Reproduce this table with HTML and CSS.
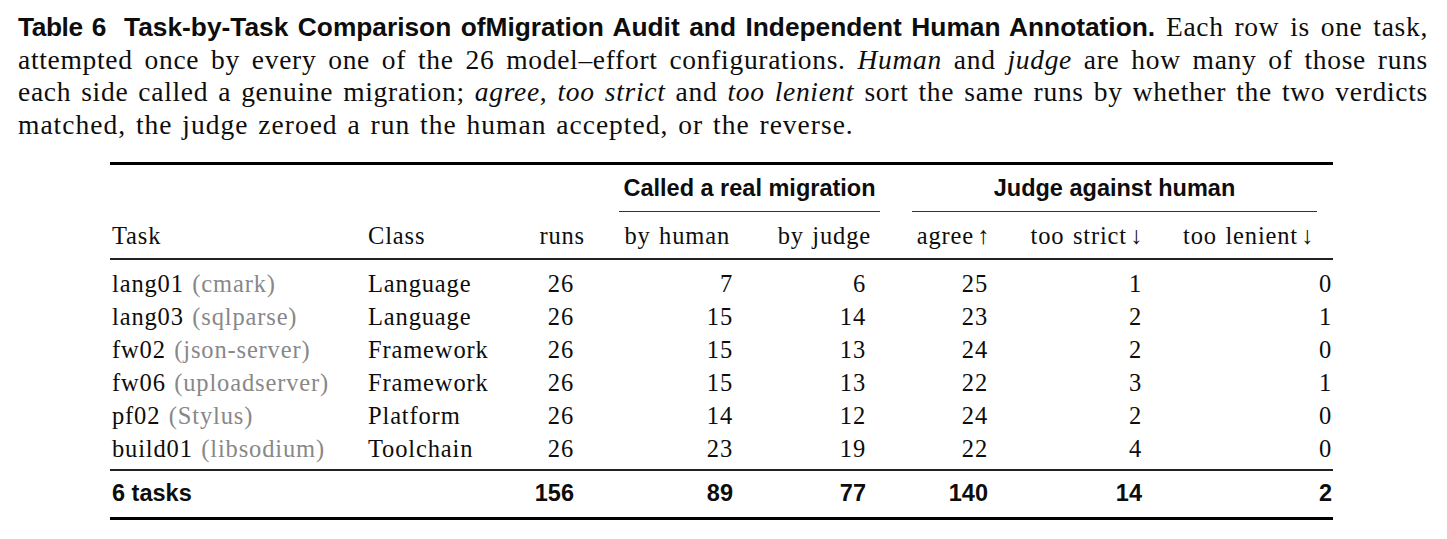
FILE: index.html
```html
<!DOCTYPE html>
<html lang="en">
<head>
<meta charset="utf-8">
<title>Table 6 – Task-by-Task Comparison</title>
<link rel="stylesheet" href="styles.css">
</head>
<body>
<figure class="table-figure">
  <figcaption class="caption">
    <span class="line"><b class="label">Table 6</b><b class="title">Task-by-Task Comparison ofMigration Audit and Independent Human Annotation.</b> Each row is one task,</span>
    <span class="line">attempted once by every one of the 26 model–effort configurations. <i>Human</i> and <i>judge</i> are how many of those runs</span>
    <span class="line">each side called a genuine migration; <i>agree</i>, <i>too strict</i> and <i>too lenient</i> sort the same runs by whether the two verdicts</span>
    <span class="line line-last">matched, the judge zeroed a run the human accepted, or the reverse.</span>
  </figcaption>
  <table class="data">
    <colgroup>
      <col class="w-task"><col class="w-class"><col class="w-runs"><col class="w-human"><col class="w-judge"><col class="w-agree"><col class="w-strict"><col class="w-lenient">
    </colgroup>
    <thead>
      <tr class="group-row">
        <th></th><th></th><th></th>
        <th colspan="2" class="group"><div class="group-label called">Called a real migration</div></th>
        <th colspan="3" class="group"><div class="group-label against">Judge against human</div></th>
      </tr>
      <tr class="head-row">
        <th class="c-task">Task</th>
        <th class="c-class">Class</th>
        <th class="c-runs">runs</th>
        <th class="c-human">by human</th>
        <th class="c-judge">by judge</th>
        <th class="c-agree">agree&#8202;↑</th>
        <th class="c-strict">too strict&#8202;↓</th>
        <th class="c-lenient">too lenient&#8202;↓</th>
      </tr>
    </thead>
    <tbody>
      <tr class="first">
        <td class="c-task">lang01 <span class="repo">(cmark)</span></td>
        <td class="c-class">Language</td>
        <td class="c-runs">26</td><td class="c-human">7</td><td class="c-judge">6</td>
        <td class="c-agree">25</td><td class="c-strict">1</td><td class="c-lenient">0</td>
      </tr>
      <tr>
        <td class="c-task">lang03 <span class="repo">(sqlparse)</span></td>
        <td class="c-class">Language</td>
        <td class="c-runs">26</td><td class="c-human">15</td><td class="c-judge">14</td>
        <td class="c-agree">23</td><td class="c-strict">2</td><td class="c-lenient">1</td>
      </tr>
      <tr>
        <td class="c-task">fw02 <span class="repo">(json-server)</span></td>
        <td class="c-class">Framework</td>
        <td class="c-runs">26</td><td class="c-human">15</td><td class="c-judge">13</td>
        <td class="c-agree">24</td><td class="c-strict">2</td><td class="c-lenient">0</td>
      </tr>
      <tr>
        <td class="c-task">fw06 <span class="repo">(uploadserver)</span></td>
        <td class="c-class">Framework</td>
        <td class="c-runs">26</td><td class="c-human">15</td><td class="c-judge">13</td>
        <td class="c-agree">22</td><td class="c-strict">3</td><td class="c-lenient">1</td>
      </tr>
      <tr>
        <td class="c-task">pf02 <span class="repo">(Stylus)</span></td>
        <td class="c-class">Platform</td>
        <td class="c-runs">26</td><td class="c-human">14</td><td class="c-judge">12</td>
        <td class="c-agree">24</td><td class="c-strict">2</td><td class="c-lenient">0</td>
      </tr>
      <tr class="last">
        <td class="c-task">build01 <span class="repo">(libsodium)</span></td>
        <td class="c-class">Toolchain</td>
        <td class="c-runs">26</td><td class="c-human">23</td><td class="c-judge">19</td>
        <td class="c-agree">22</td><td class="c-strict">4</td><td class="c-lenient">0</td>
      </tr>
    </tbody>
    <tfoot>
      <tr class="total-row">
        <td class="c-task">6 tasks</td>
        <td class="c-class"></td>
        <td class="c-runs">156</td><td class="c-human">89</td><td class="c-judge">77</td>
        <td class="c-agree">140</td><td class="c-strict">14</td><td class="c-lenient">2</td>
      </tr>
    </tfoot>
  </table>
</figure>
</body>
</html>
```

FILE: styles.css
```css
html, body {
  margin: 0;
  padding: 0;
  background: #ffffff;
}

body {
  color: #0d0d0d;
  font-family: "Liberation Serif", "Times New Roman", serif;
}

.table-figure {
  margin: 0;
  padding: 11px 19px 0 18px;
}

/* ---------- caption ---------- */
.caption {
  font-size: 27.5px;
  line-height: 32.5px;
  letter-spacing: 0.7px;
  word-spacing: 1px;
}

.caption .line {
  display: block;
  text-align: justify;
  text-align-last: justify;
}

.caption .line-last {
  text-align-last: left;
  letter-spacing: 1px;
  word-spacing: 2px;
}

.caption .label,
.caption .title {
  font-family: "Liberation Sans", Arial, sans-serif;
  font-weight: bold;
  font-size: 26.3px;
  letter-spacing: 0;
  word-spacing: 0;
}

.caption .label {
  margin-right: 18px;
  letter-spacing: -0.4px;
}

.caption i {
  font-style: italic;
}

/* ---------- table ---------- */
.data {
  margin: 21px 0 0 92px;
  width: 1223px;
  table-layout: fixed;
  border-collapse: separate;
  border-spacing: 0;
  border-top: 3px solid #000;
  border-bottom: 3px solid #000;
  font-size: 24.5px;
  letter-spacing: 0.85px;
  word-spacing: 1.5px;
}

.w-task { width: 250px; }
.w-class { width: 140px; }
.w-runs { width: 100px; }
.w-human { width: 145px; }
.w-judge { width: 150px; }
.w-agree { width: 105px; }
.w-strict { width: 160px; }
.w-lenient { width: 173px; }

.data th,
.data td {
  padding: 0;
  line-height: 33px;
  font-weight: normal;
  vertical-align: baseline;
  white-space: nowrap;
}

/* group header row */
.data .group-row th {
  padding-top: 7px;
}

.group-label {
  font-family: "Liberation Sans", Arial, sans-serif;
  font-weight: bold;
  font-size: 23.5px;
  letter-spacing: 0;
  word-spacing: 0;
  text-align: center;
  line-height: 33px;
  padding-bottom: 6px;
  border-bottom: 1px solid #333;
}

.group-label.called {
  margin: 0 15px 0 19px;
}

.group-label.against {
  margin: 0 16px 0 17px;
}

/* column header row */
.data .head-row th {
  padding-top: 7px;
  padding-bottom: 6px;
  border-bottom: 2px solid #222;
}

/* body rows */
.data tbody tr.first td { padding-top: 7px; }
.data tbody tr.last td { padding-bottom: 4px; }

.repo {
  color: #888888;
}

/* total row */
.data .total-row td {
  font-family: "Liberation Sans", Arial, sans-serif;
  font-weight: bold;
  font-size: 23.5px;
  letter-spacing: 0;
  word-spacing: 0;
  padding-top: 6px;
  padding-bottom: 7px;
  border-top: 2px solid #222;
}

/* column alignment */
.data .c-task { text-align: left; padding-left: 2px; }
.data .c-class { text-align: left; padding-left: 8px; }
.data .c-runs,
.data .c-human,
.data .c-judge,
.data .c-agree,
.data .c-strict,
.data .c-lenient { text-align: right; }

.data td.c-runs { padding-right: 26px; }
.data td.c-human { padding-right: 12px; }
.data td.c-judge { padding-right: 29px; }
.data td.c-agree { padding-right: 12px; }
.data td.c-strict { padding-right: 18px; }
.data td.c-lenient { padding-right: 1px; }

.data .head-row th.c-runs { padding-right: 15px; }
.data .head-row th.c-human { padding-right: 15px; }
.data .head-row th.c-judge { padding-right: 24px; }
.data .head-row th.c-agree { padding-right: 10px; }
.data .head-row th.c-strict { padding-right: 17px; }
.data .head-row th.c-lenient { padding-right: 19px; }
```
